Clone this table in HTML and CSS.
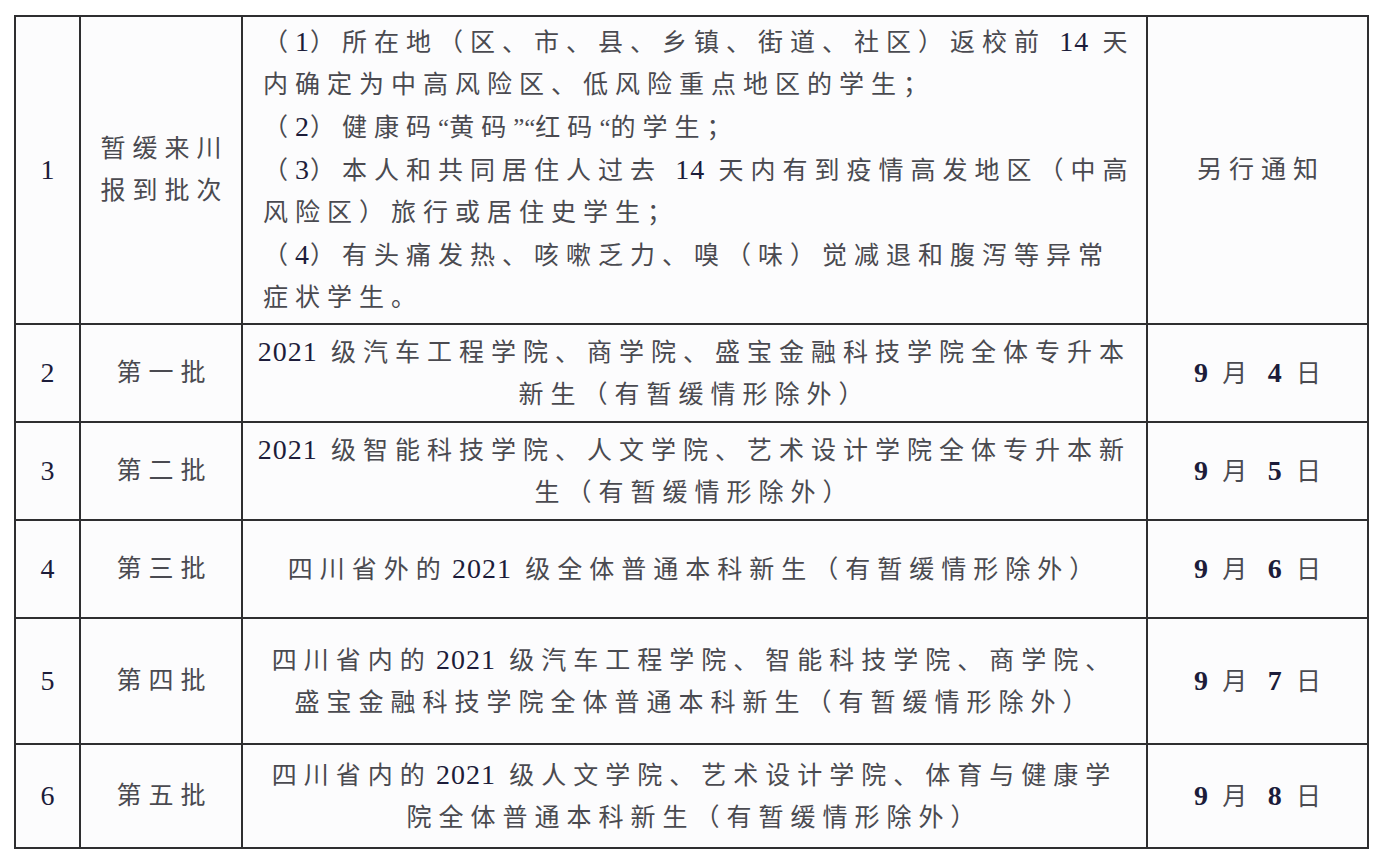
FILE: index.html
```html
<!DOCTYPE html>
<html lang="zh-CN">
<head>
<meta charset="utf-8">
<title>报到批次安排</title>
<link rel="stylesheet" href="styles.css">
</head>
<body>
<table class="sched">
  <colgroup>
    <col class="c-no">
    <col class="c-batch">
    <col class="c-desc">
    <col class="c-date">
  </colgroup>
  <tbody>
    <tr class="r1">
      <td class="no"><span class="n">1</span></td>
      <td class="batch">暂缓来川<br>报到批次</td>
      <td class="desc left">（<span class="n">1</span>）所在地（区、市、县、乡镇、街道、社区）返校前 <span class="n">14</span> 天<br>内确定为中高风险区、低风险重点地区的学生；<br>（<span class="n">2</span>）健康码<span class="q">“</span>黄码<span class="q">”“</span>红码<span class="q">“</span>的学生；<br>（<span class="n">3</span>）本人和共同居住人过去 <span class="n">14</span> 天内有到疫情高发地区（中高<br>风险区）旅行或居住史学生；<br>（<span class="n">4</span>）有头痛发热、咳嗽乏力、嗅（味）觉减退和腹泻等异常<br>症状学生。</td>
      <td class="date">另行通知</td>
    </tr>
    <tr class="r2">
      <td class="no"><span class="n">2</span></td>
      <td class="batch">第一批</td>
      <td class="desc"><span class="n">2021</span> 级汽车工程学院、商学院、盛宝金融科技学院全体专升本<br>新生（有暂缓情形除外）</td>
      <td class="date"><span class="n b">9</span> 月 <span class="n b">4</span> 日</td>
    </tr>
    <tr class="r3">
      <td class="no"><span class="n">3</span></td>
      <td class="batch">第二批</td>
      <td class="desc"><span class="n">2021</span> 级智能科技学院、人文学院、艺术设计学院全体专升本新<br>生（有暂缓情形除外）</td>
      <td class="date"><span class="n b">9</span> 月 <span class="n b">5</span> 日</td>
    </tr>
    <tr class="r4">
      <td class="no"><span class="n">4</span></td>
      <td class="batch">第三批</td>
      <td class="desc">四川省外的<span class="n sp">2021</span> 级全体普通本科新生（有暂缓情形除外）</td>
      <td class="date"><span class="n b">9</span> 月 <span class="n b">6</span> 日</td>
    </tr>
    <tr class="r5">
      <td class="no"><span class="n">5</span></td>
      <td class="batch">第四批</td>
      <td class="desc">四川省内的<span class="n sp">2021</span> 级汽车工程学院、智能科技学院、商学院、<br>盛宝金融科技学院全体普通本科新生（有暂缓情形除外）</td>
      <td class="date"><span class="n b">9</span> 月 <span class="n b">7</span> 日</td>
    </tr>
    <tr class="r6">
      <td class="no"><span class="n">6</span></td>
      <td class="batch">第五批</td>
      <td class="desc">四川省内的<span class="n sp">2021</span> 级人文学院、艺术设计学院、体育与健康学<br>院全体普通本科新生（有暂缓情形除外）</td>
      <td class="date"><span class="n b">9</span> 月 <span class="n b">8</span> 日</td>
    </tr>
  </tbody>
</table>
</body>
</html>
```

FILE: styles.css
```css
html, body {
  margin: 0;
  padding: 0;
  background: #ffffff;
}

body {
  padding: 15px 0 0 14px;
  font-family: "Liberation Serif", "Noto Sans CJK SC", serif;
  color: #4a4a50;
}

.sched {
  border-collapse: collapse;
  table-layout: fixed;
  width: 1355px;
  background: #fcfcfd;
}

.c-no { width: 65px; }
.c-batch { width: 162px; }
.c-desc { width: 905px; }
.c-date { width: 221px; }

.sched td {
  border: 2px solid #2e2e30;
  padding: 0;
  text-align: center;
  vertical-align: middle;
  font-size: 25px;
  line-height: 42px;
  letter-spacing: 7px;
  white-space: nowrap;
}

.sched td.left {
  text-align: left;
  padding-left: 20px;
}

.sched td.no {
  letter-spacing: 0;
}

.sched td.batch {
  padding-left: 7px;
}

.sched td.date {
  padding-left: 7px;
}

.n {
  font-family: "Liberation Serif", serif;
  font-size: 28px;
  letter-spacing: 1px;
  color: #1c1c3a;
}

.n.sp {
  margin-left: 4px;
}

.no .n {
  letter-spacing: 0;
}

.b {
  font-weight: bold;
}

.q {
  font-family: "Liberation Serif", serif;
  letter-spacing: 0;
}

.r1 { height: 308px; }
.r2 { height: 98px; }
.r3 { height: 98px; }
.r4 { height: 98px; }
.r5 { height: 126px; }
.r6 { height: 104px; }
```
